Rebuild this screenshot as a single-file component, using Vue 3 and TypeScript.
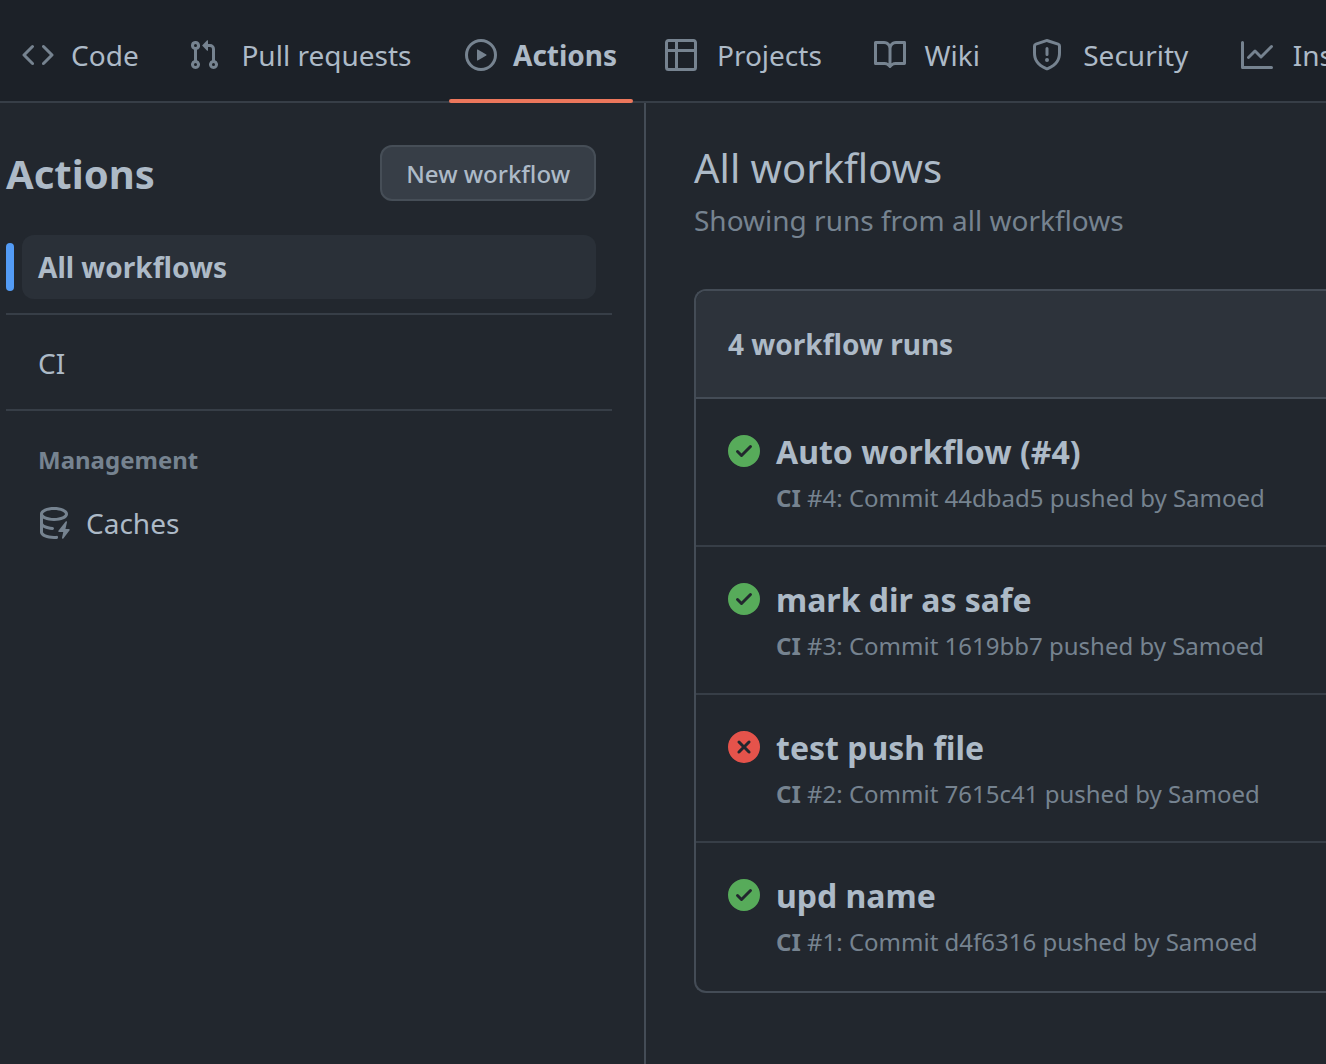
<script setup lang="ts">
interface Tab {
  label: string
  icon: string
  active?: boolean
}

interface Run {
  id: number
  title: string
  commit: string
  ok: boolean
}

const tabs: Tab[] = [
  { label: 'Code', icon: 'm11.28 3.22 4.25 4.25a.75.75 0 0 1 0 1.06l-4.25 4.25a.749.749 0 0 1-1.275-.326.749.749 0 0 1 .215-.734L13.94 8l-3.72-3.72a.749.749 0 0 1 .326-1.275.749.749 0 0 1 .734.215Zm-6.56 0a.751.751 0 0 1 1.042.018.751.751 0 0 1 .018 1.042L2.06 8l3.72 3.72a.749.749 0 0 1-.326 1.275.749.749 0 0 1-.734-.215L.47 8.53a.75.75 0 0 1 0-1.06Z' },
  { label: 'Pull requests', icon: 'M1.5 3.25a2.25 2.25 0 1 1 3 2.122v5.256a2.251 2.251 0 1 1-1.5 0V5.372A2.25 2.25 0 0 1 1.5 3.25Zm5.677-.177L9.573.677A.25.25 0 0 1 10 .854V2.5h1A2.5 2.5 0 0 1 13.5 5v5.628a2.251 2.251 0 1 1-1.5 0V5a1 1 0 0 0-1-1h-1v1.646a.25.25 0 0 1-.427.177L7.177 3.427a.25.25 0 0 1 0-.354ZM3.75 2.5a.75.75 0 1 0 0 1.5.75.75 0 0 0 0-1.5Zm0 9.5a.75.75 0 1 0 0 1.5.75.75 0 0 0 0-1.5Zm8.25.75a.75.75 0 1 0 1.5 0 .75.75 0 0 0-1.5 0Z' },
  { label: 'Actions', active: true, icon: 'M8 0a8 8 0 1 1 0 16A8 8 0 0 1 8 0ZM1.5 8a6.5 6.5 0 1 0 13 0 6.5 6.5 0 0 0-13 0Zm4.879-2.773 4.264 2.559a.25.25 0 0 1 0 .428l-4.264 2.559A.25.25 0 0 1 6 10.559V5.442a.25.25 0 0 1 .379-.215Z' },
  { label: 'Projects', icon: 'M0 1.75C0 .784.784 0 1.75 0h12.5C15.216 0 16 .784 16 1.75v12.5A1.75 1.75 0 0 1 14.25 16H1.75A1.75 1.75 0 0 1 0 14.25ZM6.5 6.5v8h7.75a.25.25 0 0 0 .25-.25V6.5Zm8-1.5V1.75a.25.25 0 0 0-.25-.25H6.5V5Zm-13 1.5v7.75c0 .138.112.25.25.25H5v-8ZM5 5V1.5H1.75a.25.25 0 0 0-.25.25V5Z' },
  { label: 'Wiki', icon: 'M0 1.75A.75.75 0 0 1 .75 1h4.253c1.227 0 2.317.59 3 1.501A3.743 3.743 0 0 1 11.006 1h4.245a.75.75 0 0 1 .75.75v10.5a.75.75 0 0 1-.75.75h-4.507a2.25 2.25 0 0 0-1.591.659l-.622.621a.75.75 0 0 1-1.06 0l-.622-.621A2.25 2.25 0 0 0 5.258 13H.75a.75.75 0 0 1-.75-.75Zm7.251 10.324.004-5.073-.002-2.253A2.25 2.25 0 0 0 5.003 2.5H1.5v9h3.757a3.75 3.75 0 0 1 1.994.574ZM8.755 4.75l-.004 7.322a3.752 3.752 0 0 1 1.992-.572H14.5v-9h-3.495a2.25 2.25 0 0 0-2.25 2.25Z' },
  { label: 'Security', icon: 'M7.467.133a1.748 1.748 0 0 1 1.066 0l5.25 1.68A1.75 1.75 0 0 1 15 3.48V7c0 1.566-.32 3.182-1.303 4.682-.983 1.498-2.585 2.813-5.032 3.855a1.697 1.697 0 0 1-1.33 0c-2.447-1.042-4.049-2.357-5.032-3.855C1.32 10.182 1 8.566 1 7V3.48a1.75 1.75 0 0 1 1.217-1.667Zm.61 1.429a.25.25 0 0 0-.153 0l-5.25 1.68a.25.25 0 0 0-.174.238V7c0 1.358.275 2.666 1.057 3.86.784 1.194 2.121 2.34 4.366 3.297a.196.196 0 0 0 .154 0c2.245-.956 3.582-2.104 4.366-3.298C13.225 9.666 13.5 8.36 13.5 7V3.48a.251.251 0 0 0-.174-.237l-5.25-1.68ZM8.75 4.75v3a.75.75 0 0 1-1.5 0v-3a.75.75 0 0 1 1.5 0ZM9 10.5a1 1 0 1 1-2 0 1 1 0 0 1 2 0Z' },
  { label: 'Insights', icon: 'M1.5 1.75V13.5h13.75a.75.75 0 0 1 0 1.5H.75a.75.75 0 0 1-.75-.75V1.75a.75.75 0 0 1 1.5 0Zm14.28 2.53-5.25 5.25a.75.75 0 0 1-1.06 0L7 7.06 4.28 9.78a.751.751 0 0 1-1.042-.018.751.751 0 0 1-.018-1.042l3.25-3.25a.75.75 0 0 1 1.06 0L10 7.94l4.72-4.72a.751.751 0 0 1 1.042.018.751.751 0 0 1 .018 1.042Z' },
]

const runs: Run[] = [
  { id: 4, title: 'Auto workflow (#4)', commit: '44dbad5', ok: true },
  { id: 3, title: 'mark dir as safe', commit: '1619bb7', ok: true },
  { id: 2, title: 'test push file', commit: '7615c41', ok: false },
  { id: 1, title: 'upd name', commit: 'd4f6316', ok: true },
]

const checkIcon = 'M8 16A8 8 0 1 1 8 0a8 8 0 0 1 0 16Zm3.78-9.72a.751.751 0 0 0-.018-1.042.751.751 0 0 0-1.042-.018L6.75 9.19 5.28 7.72a.751.751 0 0 0-1.042.018.751.751 0 0 0-.018 1.042l2 2a.75.75 0 0 0 1.06 0Z'
const failIcon = 'M2.343 13.657A8 8 0 1 1 13.658 2.343 8 8 0 0 1 2.343 13.657ZM6.03 4.97a.751.751 0 0 0-1.042.018.751.751 0 0 0-.018 1.042L6.94 8 4.97 9.97a.749.749 0 0 0 .326 1.275.749.749 0 0 0 .734-.215L8 9.06l1.97 1.97a.749.749 0 0 0 1.275-.326.749.749 0 0 0-.215-.734L9.06 8l1.97-1.97a.749.749 0 0 0-.326-1.275.749.749 0 0 0-.734.215L8 6.94Z'
const cacheIcon = 'M2.5 5.724V8c0 .248.238.7 1.169 1.159.874.43 2.144.745 3.62.822a.75.75 0 1 1-.078 1.498c-1.622-.085-3.102-.432-4.204-.975a5.565 5.565 0 0 1-.507-.28V12.5c0 .133.058.318.282.551.227.237.591.483 1.101.707 1.015.447 2.47.742 4.117.742.406 0 .802-.018 1.183-.052a.751.751 0 1 1 .134 1.494C8.89 15.98 8.45 16 8 16c-1.805 0-3.475-.32-4.721-.869-.623-.274-1.173-.619-1.579-1.041-.408-.425-.7-.964-.7-1.59v-9c0-.626.292-1.165.7-1.591.406-.42.956-.766 1.579-1.04C4.525.32 6.195 0 8 0c1.806 0 3.476.32 4.721.869.623.274 1.173.619 1.579 1.041.408.425.7.964.7 1.59 0 .626-.292 1.165-.7 1.591-.406.42-.956.766-1.578 1.04C11.475 6.68 9.805 7 8 7c-1.805 0-3.475-.32-4.721-.869a6.15 6.15 0 0 1-.779-.407Zm0-2.224c0 .133.058.318.282.551.227.237.591.483 1.101.707C4.898 5.205 6.353 5.5 8 5.5c1.646 0 3.101-.295 4.118-.742.508-.224.873-.471 1.1-.708.224-.232.282-.417.282-.55 0-.133-.058-.318-.282-.551-.227-.237-.591-.483-1.101-.707C11.102 1.795 9.647 1.5 8 1.5c-1.646 0-3.101.295-4.118.742-.508.224-.873.471-1.1.708-.224.232-.282.417-.282.55ZM14.49 7.582a.375.375 0 0 0-.66-.313l-3.625 4.625a.375.375 0 0 0 .295.606h2.127l-.619 2.922a.375.375 0 0 0 .666.304l3.125-4.125A.375.375 0 0 0 15.5 11h-1.778l.769-3.418Z'
</script>

<template>
  <div class="page">
    <nav class="tabs" aria-label="Repository">
      <a
        v-for="tab in tabs"
        :key="tab.label"
        href="#"
        class="tab"
        :class="{ active: tab.active }"
        :aria-current="tab.active ? 'page' : undefined"
      >
        <svg class="icon" viewBox="0 0 16 16" aria-hidden="true"><path :d="tab.icon" /></svg>
        <span class="tab-label" :data-content="tab.label">{{ tab.label }}</span>
      </a>
    </nav>

    <div class="columns">
      <aside class="sidebar">
        <div class="sidebar-head">
          <h2 class="sidebar-title">Actions</h2>
          <button type="button" class="new-workflow">New workflow</button>
        </div>
        <ul class="menu">
          <li class="selected"><a href="#" class="menu-item">All workflows</a></li>
          <li class="divider" role="separator"></li>
          <li><a href="#" class="menu-item">CI</a></li>
          <li class="divider" role="separator"></li>
        </ul>
        <h3 class="group-title">Management</h3>
        <ul class="menu">
          <li>
            <a href="#" class="menu-item">
              <svg class="icon" viewBox="0 0 16 16" aria-hidden="true"><path :d="cacheIcon" /></svg>
              <span>Caches</span>
            </a>
          </li>
        </ul>
      </aside>

      <main class="content">
        <h1 class="heading">All workflows</h1>
        <p class="subheading">Showing runs from all workflows</p>
        <section class="card">
          <header class="card-head">{{ runs.length }} workflow runs</header>
          <ul class="runs">
            <li v-for="run in runs" :key="run.id" class="run">
              <svg
                class="icon"
                :class="run.ok ? 'ok' : 'fail'"
                viewBox="0 0 16 16"
                role="img"
                :aria-label="run.ok ? 'completed successfully' : 'failed'"
              >
                <path :d="run.ok ? checkIcon : failIcon" />
              </svg>
              <div>
                <a href="#" class="run-title">{{ run.title }}</a>
                <p class="run-meta"><b>CI</b> #{{ run.id }}: Commit {{ run.commit }} pushed by Samoed</p>
              </div>
            </li>
          </ul>
        </section>
      </main>
    </div>
  </div>
</template>

<style>
body {
  background: #22272e;
  overflow-x: hidden;
}
</style>

<style scoped>
.page {
  display: flex;
  flex-direction: column;
  min-height: 100vh;
  color: #adbac7;
  font: 400 28px/42px "Noto Sans", sans-serif;
}

h1,
h2,
h3,
p,
ul {
  margin: 0;
  padding: 0;
}

ul {
  list-style: none;
}

a {
  color: inherit;
  text-decoration: none;
}

.icon {
  flex: none;
  width: 32px;
  height: 32px;
  fill: #768390;
}

.tabs {
  display: flex;
  gap: 16px;
  padding: 7px 0 0 6px;
  background: #1c2128;
  box-shadow: inset 0 -2px #373e47;
  white-space: nowrap;
  overflow: hidden;
}

.tab {
  position: relative;
  display: flex;
  flex: none;
  align-items: center;
  gap: 16px;
  height: 96px;
  padding: 0 16px;
}

.tab-label {
  text-align: center;
}

/* Reserves the bold width so that tabs keep their size when selected */
.tab-label::before {
  content: attr(data-content);
  display: block;
  height: 0;
  font-weight: 700;
  visibility: hidden;
}

.active {
  font-weight: 700;
}

.active::after {
  content: "";
  position: absolute;
  right: 0;
  bottom: 0;
  left: 0;
  height: 4px;
  border-radius: 2px;
  background: #ec775c;
}

.columns {
  display: flex;
  flex: 1;
}

.sidebar {
  box-sizing: border-box;
  flex: none;
  width: 646px;
  padding: 42px 32px 32px 6px;
  border-right: 2px solid #444c56;
}

.sidebar-head {
  display: flex;
  align-items: center;
  justify-content: space-between;
  margin-bottom: 34px;
  padding-right: 16px;
}

.sidebar-title {
  padding-top: 2px;
  font-size: 40px;
  font-weight: 700;
  line-height: 54px;
}

.new-workflow {
  height: 56px;
  padding: 2px 24px 0;
  border: 2px solid #464e57;
  border-radius: 12px;
  background: #373e47;
  color: inherit;
  font: 500 24px/40px "Noto Sans", sans-serif;
}

.menu-item {
  display: flex;
  align-items: center;
  gap: 16px;
  height: 64px;
  margin: 0 16px;
  padding: 0 16px;
  border-radius: 12px;
}

.selected {
  position: relative;
  font-weight: 700;
}

.selected .menu-item {
  background: #2a3038;
}

.selected::before {
  content: "";
  position: absolute;
  top: 8px;
  bottom: 8px;
  left: 0;
  width: 8px;
  border-radius: 4px;
  background: #539bf5;
}

.divider {
  height: 2px;
  margin: 14px 0 16px;
  background: #373e47;
}

.group-title {
  padding: 15px 32px 13px;
  color: #768390;
  font-size: 24px;
  font-weight: 700;
  line-height: 36px;
}

.content {
  flex: 1;
  min-width: 0;
  padding: 35px 0 32px 48px;
}

.heading {
  font-size: 40px;
  font-weight: 400;
  line-height: 60px;
}

.subheading {
  margin-top: 1px;
  color: #768390;
}

.card {
  margin-top: 48px;
  padding-bottom: 2px;
  border: 2px solid #444c56;
  border-right: 0;
  border-radius: 12px 0 0 12px;
  overflow: hidden;
}

.card-head {
  padding: 32px;
  border-bottom: 2px solid #444c56;
  background: #2d333b;
  font-weight: 700;
}

.run {
  display: flex;
  gap: 16px;
  padding: 36px 32px 28px;
  white-space: nowrap;
}

.run + .run {
  border-top: 2px solid #373e47;
}

.run-title {
  display: block;
  font-size: 32px;
  font-weight: 700;
  line-height: 34px;
}

.run-meta {
  margin: 11px 0 1px;
  color: #768390;
  font-size: 24px;
  line-height: 36px;
}

.run-meta b {
  font-weight: 700;
}

.ok {
  fill: #57ab5a;
}

.fail {
  fill: #e5534b;
}
</style>
